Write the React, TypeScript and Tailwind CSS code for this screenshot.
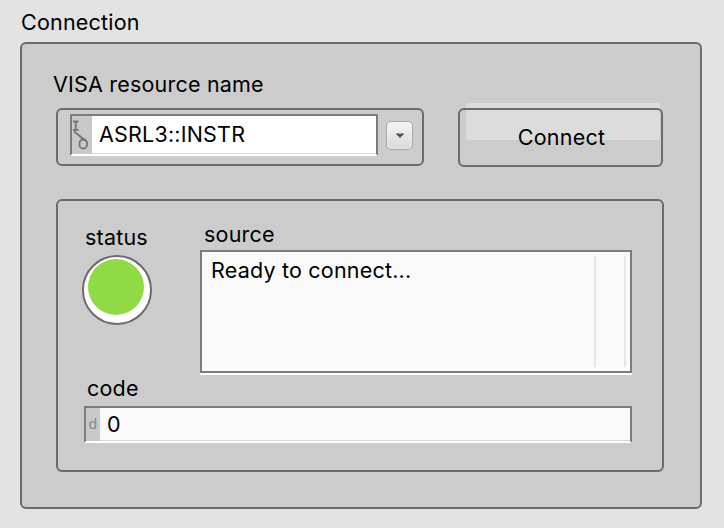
export default function App() {
  return (
    <div className="w-[724px] h-[528px] bg-[#e3e3e3] [font-family:Inter,'Liberation_Sans',sans-serif] text-[21.5px] tracking-[0.2px] leading-[25px] text-black pt-[10px] pl-[20px]">
      <div className="ml-[1px]">Connection</div>
      <div className="mt-[7px] w-[682px] h-[467px] border-2 border-[#6b6b6b] rounded-[6px] bg-[#cccccc] pl-[34px] pt-[28px]">
        <div className="-ml-[3px]">VISA resource name</div>
        <div className="mt-[11px] flex items-start">
          <div className="w-[368px] h-[58px] border-2 border-[#6b6b6b] rounded-[6px] flex items-start pl-[12px] pt-[4px]">
            <div className="w-[308px] h-[42px] border-t-2 border-l-2 border-r-2 border-[#7c7c7c] border-b-2 border-b-white flex">
              <div className="w-[20px] h-full bg-[#c9c9c9]">
                <svg width="20" height="38" viewBox="0 0 20 38" fill="none" stroke="#747474" strokeWidth="1.8">
                  <path d="M1 5.5H6.5M3.75 5.5V14M1 14H6.5" />
                  <path d="M2 15.5L14 25" />
                  <rect x="7.5" y="23.5" width="7.5" height="9" rx="3.5" />
                </svg>
              </div>
              <div className="flex-1 bg-white pl-[7px] flex items-center border-b border-[#d8d8d8]">ASRL3::INSTR</div>
            </div>
            <div className="ml-[8px] mt-[7px] w-[27px] h-[29px] rounded-[5px] border border-[#a8a8a8] bg-gradient-to-b from-[#f4f4f4] to-[#dadada] shadow-[inset_0_0_2px_#ffffff] flex items-center justify-center">
              <svg width="10" height="6" viewBox="0 0 10 6">
                <path d="M0.5 0.5H9.5L5 5Z" fill="#555555" />
              </svg>
            </div>
          </div>
          <div className="ml-[34px] relative w-[205px] h-[59px]">
            <div className="absolute left-[8px] top-[-5px] w-[194px] h-[37px] bg-[#dcdcdc]" />
            <div className="relative h-full border-2 border-[#6b6b6b] rounded-[6px] flex items-center justify-center pl-[2px]">Connect</div>
          </div>
        </div>
        <div className="mt-[32px] w-[608px] h-[273px] border-2 border-[#6b6b6b] rounded-[6px] pl-[24px] pt-[21px]">
          <div className="flex items-start">
            <div className="w-[118px] pt-[3px]">
              <div className="ml-[3px]">status</div>
              <div className="mt-[5px] w-[70px] h-[70px] rounded-full border-2 border-[#6b6b6b] bg-white">
                <div className="ml-[4px] mt-[2px] w-[56px] h-[56px] rounded-full bg-[#90da45]" />
              </div>
            </div>
            <div>
              <div className="ml-[4px]">source</div>
              <div className="mt-[3px] w-[432px] h-[123px] border-2 border-[#7c7c7c] bg-[#fafafa] shadow-[0_2px_0_#ffffff] flex">
                <div className="flex-1 pl-[9px] pt-[6px]">Ready to connect...</div>
                <div className="w-[32px] my-[4px] mr-[4px] border-l-2 border-r-2 border-[#e6e6e6]" />
              </div>
            </div>
          </div>
          <div className="mt-[3px] ml-[5px]">code</div>
          <div className="mt-[5px] ml-[2px] w-[548px] h-[37px] border-t-2 border-l-2 border-r-2 border-[#7c7c7c] border-b-2 border-b-white flex">
            <div className="w-[14px] h-full bg-[#c9c9c9] flex items-center justify-center text-[14px] tracking-normal text-[#8a8a8a] [font-family:'DejaVu_Sans',sans-serif]">d</div>
            <div className="flex-1 bg-[#fafafa] pl-[7px] flex items-center border-b border-[#d8d8d8]">0</div>
          </div>
        </div>
      </div>
    </div>
  );
}
